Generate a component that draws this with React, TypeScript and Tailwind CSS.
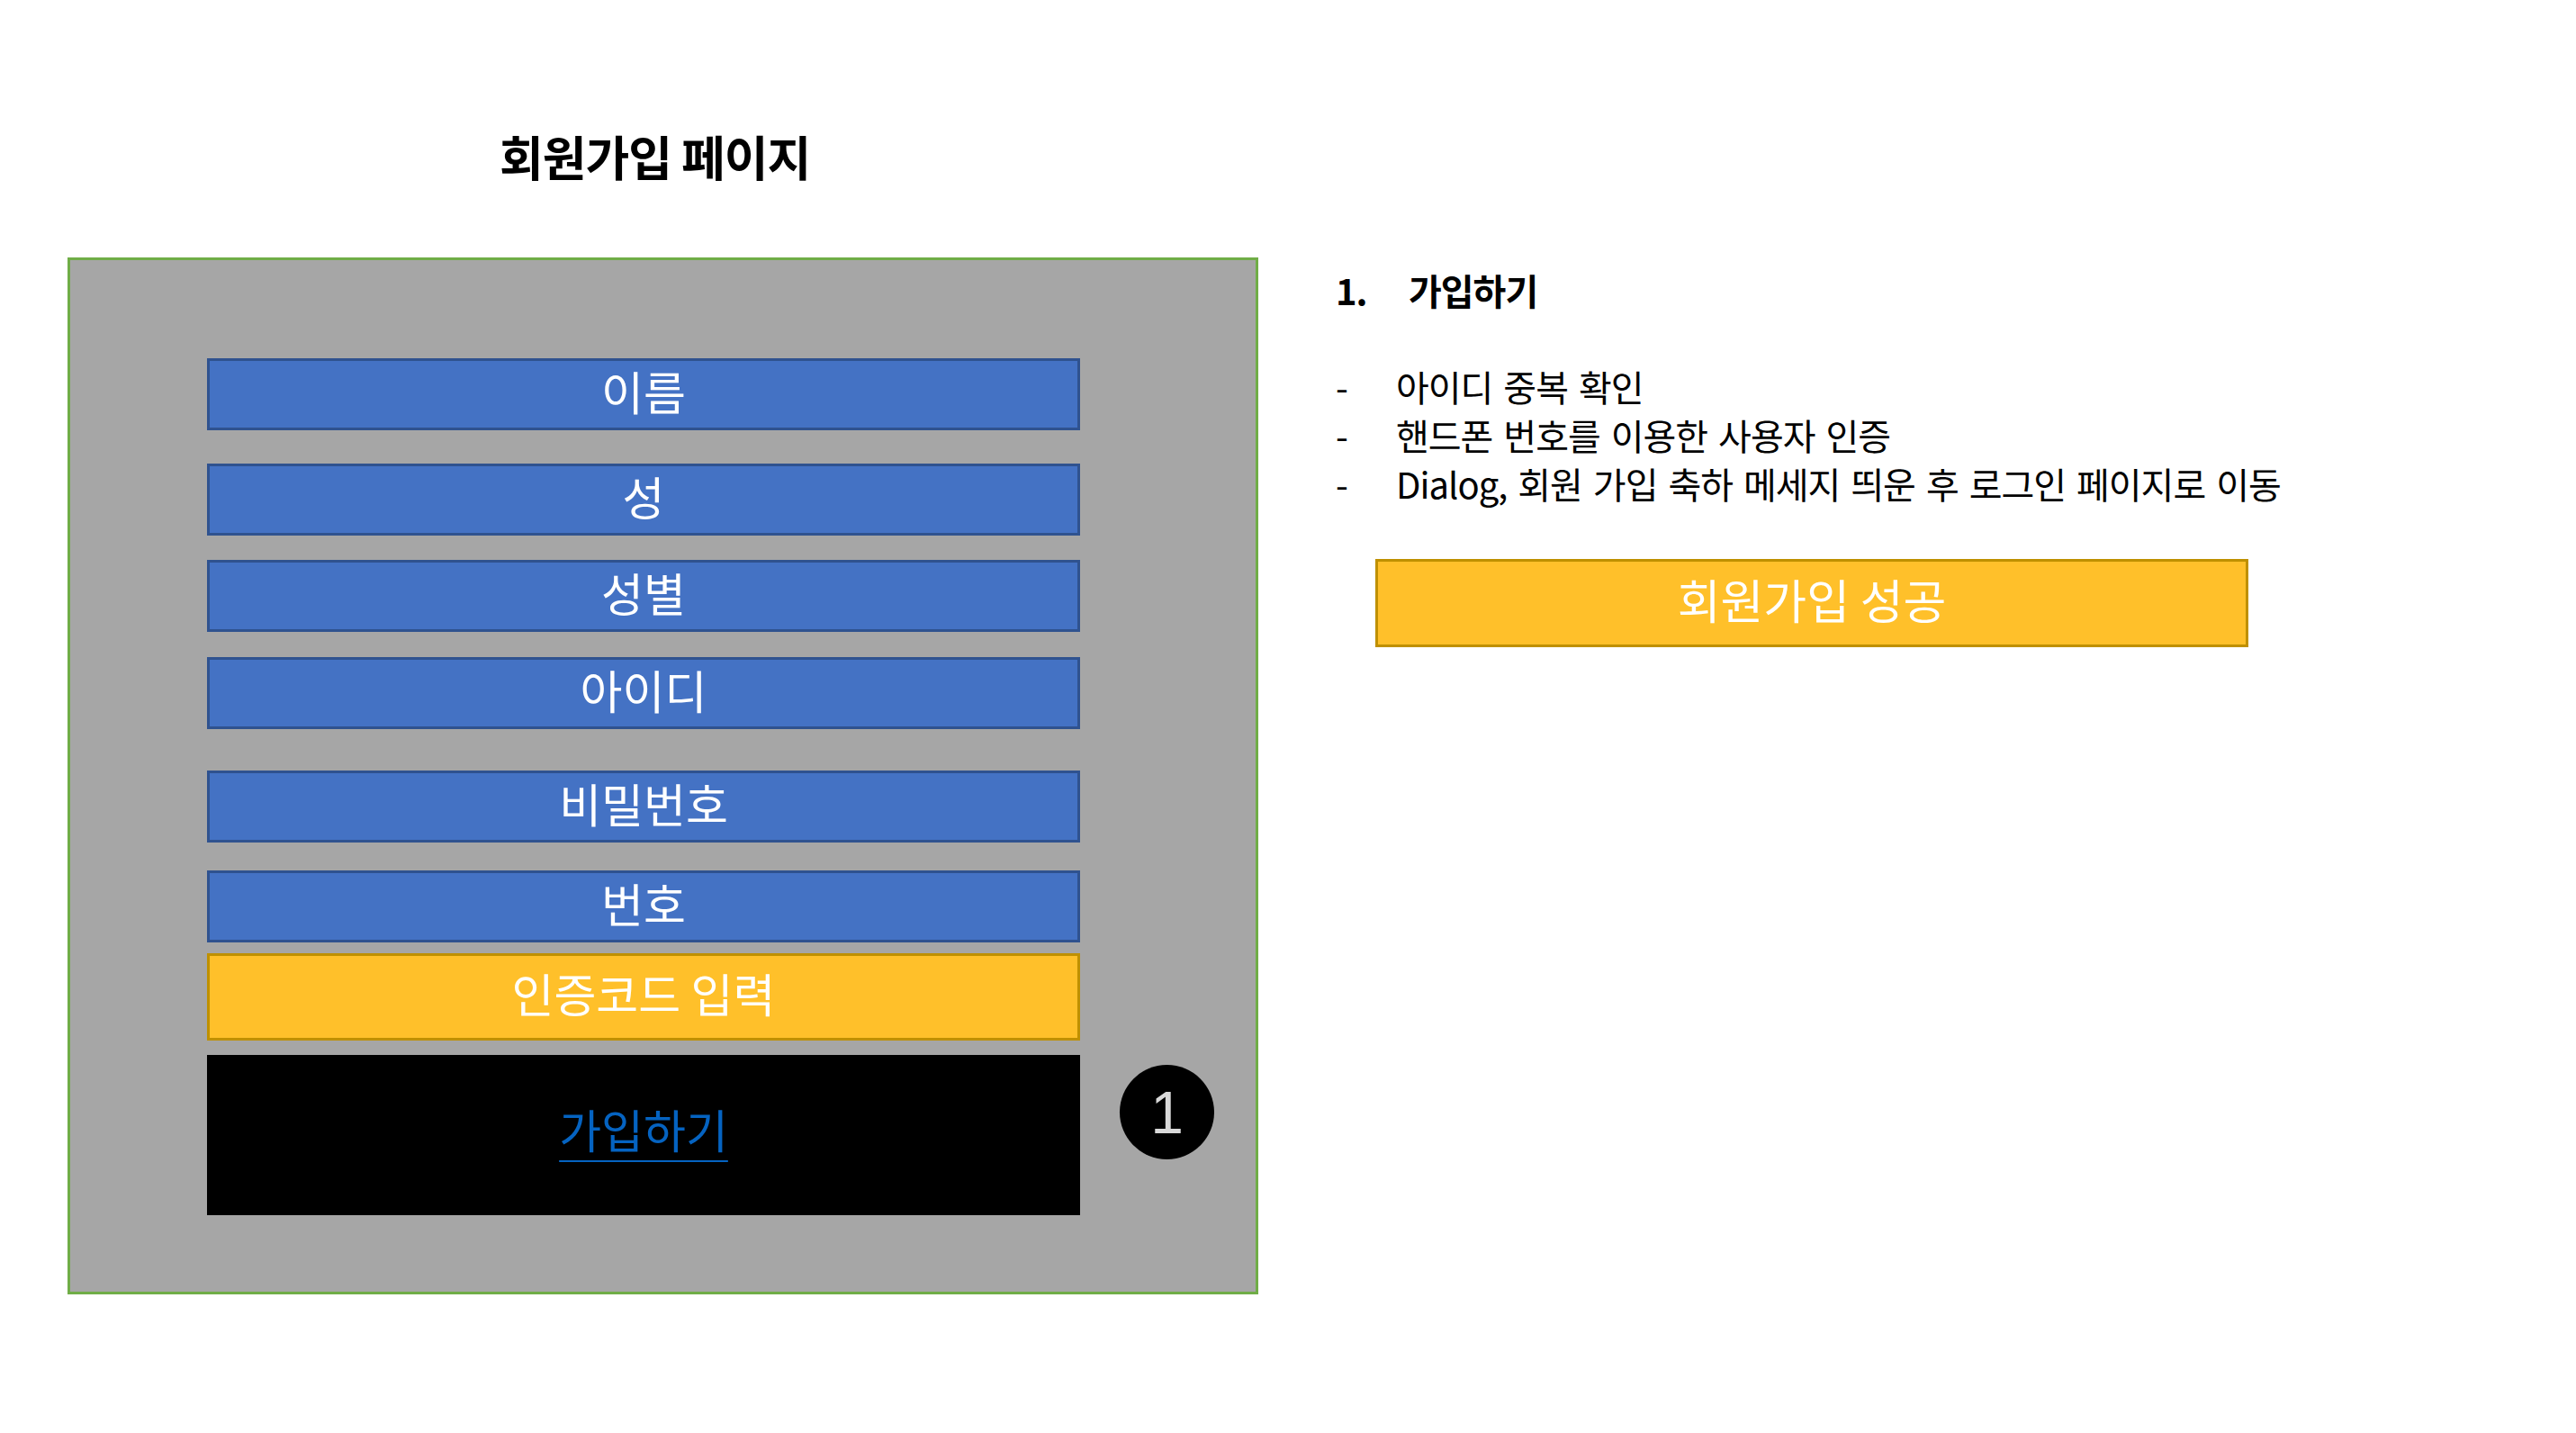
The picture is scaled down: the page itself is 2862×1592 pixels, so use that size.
import React from 'react';

const fields = [
  { label: '이름', mt: 'mt-0' },
  { label: '성', mt: 'mt-[37px]' },
  { label: '성별', mt: 'mt-[27px]' },
  { label: '아이디', mt: 'mt-[28px]' },
  { label: '비밀번호', mt: 'mt-[46px]' },
  { label: '번호', mt: 'mt-[31px]' },
];

const notes = [
  '아이디 중복 확인',
  '핸드폰 번호를 이용한 사용자 인증',
  'Dialog, 회원 가입 축하 메세지 띄운 후 로그인 페이지로 이동',
];

export default function App() {
  return (
    <div className="w-[2862px] h-[1592px] bg-white flex items-start font-['Noto_Sans_CJK_KR','Noto_Sans',sans-serif] text-black">
      {/* left: signup page mock */}
      <div className="pl-[75px] pt-[146px] flex flex-col">
        <h1 className="ml-[480px] h-[54px] text-[53px] leading-[54px] font-bold tracking-[-1px]">
          회원가입 페이지
        </h1>

        <div className="mt-[86px] w-[1323px] h-[1152px] border-[3px] border-[#70ad47] bg-[#a6a6a6] pl-[152px] pt-[109px]">
          {fields.map((f) => (
            <div
              key={f.label}
              className={`${f.mt} w-[970px] h-[80px] border-[3px] border-[#2f528f] bg-[#4472c4] flex items-center justify-center pb-[8px] text-white text-[51px] leading-none`}
            >
              {f.label}
            </div>
          ))}

          <div className="mt-[12px] w-[970px] h-[97px] border-[3px] border-[#bf9000] bg-[#ffc02a] flex items-center justify-center pb-[8px] text-white text-[51px] leading-none">
            인증코드 입력
          </div>

          <div className="mt-[16px] flex items-start">
            <div className="w-[970px] h-[178px] bg-black flex items-center justify-center pb-[14px]">
              <span className="text-[51px] leading-none text-[#0563c1] underline decoration-2 underline-offset-[13px]">
                가입하기
              </span>
            </div>
            <div className="ml-[44px] mt-[11px] w-[105px] h-[105px] rounded-full bg-black flex items-center justify-center font-['Liberation_Sans',sans-serif] text-[66px] leading-none text-[#d9d9d9]">
              1
            </div>
          </div>
        </div>
      </div>

      {/* right: description */}
      <div className="ml-[86px] pt-[295px] flex flex-col">
        <div className="flex h-[54px] items-center text-[40px] leading-[54px] font-bold tracking-[-1px]">
          <span className="w-[81px]">1.</span>
          <span>가입하기</span>
        </div>

        <ul className="mt-[53px] flex flex-col">
          {notes.map((n) => (
            <li key={n} className="flex h-[54px] items-center text-[40px] leading-[54px] tracking-[-1px] [word-spacing:4px]">
              <span className="w-[67px]">-</span>
              <span>{n}</span>
            </li>
          ))}
        </ul>

        <div className="mt-[57px] ml-[44px] w-[970px] h-[98px] border-[3px] border-[#bf9000] bg-[#ffc02a] flex items-center justify-center pb-[8px] text-white text-[52px] leading-none">
          회원가입 성공
        </div>
      </div>
    </div>
  );
}
